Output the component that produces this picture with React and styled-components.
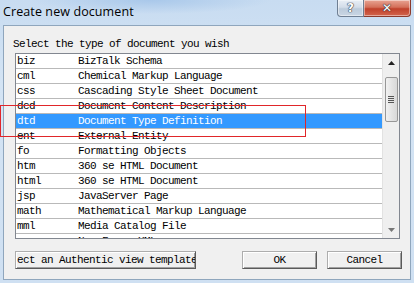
import React from 'react';
import styled, { createGlobalStyle } from 'styled-components';

const Global = createGlobalStyle`
    html, body {
        margin: 0;
        padding: 0;
        overflow: hidden;
    }
`;

const mono = `"Liberation Mono", "DejaVu Sans Mono", monospace`;

const rows = [
    ['biz', 'BizTalk Schema'],
    ['cml', 'Chemical Markup Language'],
    ['css', 'Cascading Style Sheet Document'],
    ['dcd', 'Document Content Description'],
    ['dtd', 'Document Type Definition'],
    ['ent', 'External Entity'],
    ['fo', 'Formatting Objects'],
    ['htm', '360 se HTML Document'],
    ['html', '360 se HTML Document'],
    ['jsp', 'JavaServer Page'],
    ['math', 'Mathematical Markup Language'],
    ['mml', 'Media Catalog File'],
    ['nav', 'New Forms XML'],
];

// Window frame
const Window = styled.div`
    position: relative;
    width: 414px;
    height: 283px;
    display: flex;
    flex-direction: column;
    background: linear-gradient(180deg, #c8dcf1 0%, #d4e4f4 30%, #cfe0f2 100%);
    overflow: hidden;
`;

const TitleBar = styled.div`
    height: 24px;
    display: flex;
    justify-content: space-between;
    align-items: flex-start;
    background: radial-gradient(ellipse 120px 14px at 150px 0px, #a9c8ea 0%, rgba(169, 200, 234, 0) 100%);
`;

const Title = styled.div`
    padding: 3px 0 0 3px;
    font-family: "Open Sans", "Noto Sans", sans-serif;
    font-size: 12.5px;
    color: #000;
    letter-spacing: 0.1px;
`;

const Controls = styled.div`
    display: flex;
    margin-right: 3px;
`;

const CtrlButton = styled.div`
    width: ${({ w }) => w}px;
    height: 17px;
    box-sizing: border-box;
    display: flex;
    align-items: center;
    justify-content: center;
    border: 1px solid ${({ close }) => (close ? '#8b3a2c' : '#6f7f93')};
    border-top: none;
    border-left-width: ${({ close }) => (close ? 0 : 1)}px;
    border-radius: ${({ close }) => (close ? '0 0 4px 0' : '0 0 0 4px')};
    background: ${({ close }) =>
        close
            ? 'linear-gradient(180deg, #e8a493 0%, #d4705a 45%, #c0412b 55%, #d2654d 100%)'
            : 'linear-gradient(180deg, #e9eff6 0%, #d3dde9 45%, #bccbdb 55%, #c9d6e4 100%)'};
    box-shadow: inset 0 0 0 1px rgba(255, 255, 255, 0.45);
`;

// Client area
const Client = styled.div`
    flex: 1;
    margin: 1px 3px 3px 3px;
    border: 1px solid #8fa6bd;
    background: #f0f0f0;
    display: flex;
    flex-direction: column;
`;

const Prompt = styled.div`
    padding: 11px 0 0 9px;
    height: 16px;
    font-family: ${mono};
    font-size: 11px;
    letter-spacing: -0.6px;
    line-height: 14px;
    color: #000;
    white-space: pre;
`;

const ListBox = styled.div`
    margin: 0 0 0 11px;
    width: 385px;
    height: 186px;
    box-sizing: border-box;
    border: 1px solid #828790;
    background: #fff;
    display: flex;
`;

const Rows = styled.div`
    flex: 1;
    overflow: hidden;
`;

const Row = styled.div`
    height: 14px;
    display: flex;
    border-bottom: 1px solid #b9b9b9;
    background: ${({ selected }) => (selected ? '#3399ff' : 'transparent')};
    color: ${({ selected }) => (selected ? '#fff' : '#000')};
    font-family: ${mono};
    font-size: 11px;
    letter-spacing: -0.6px;
    line-height: 15px;
    white-space: pre;
`;

const Ext = styled.span`
    width: 61px;
    padding-left: 1px;
    flex-shrink: 0;
`;

const Desc = styled.span``;

const Scrollbar = styled.div`
    width: 16px;
    flex-shrink: 0;
    background: #efefef;
    border-left: 1px solid #e2e2e2;
    display: flex;
    flex-direction: column;
    align-items: center;
`;

const Arrow = styled.div`
    height: 17px;
    width: 16px;
    display: flex;
    align-items: center;
    justify-content: center;
`;

const Thumb = styled.div`
    margin-top: 6px;
    width: 13px;
    height: 45px;
    box-sizing: border-box;
    border: 1px solid #979797;
    border-radius: 2px;
    background: linear-gradient(90deg, #f2f2f2 0%, #e4e4e4 50%, #d8d8d8 100%);
    display: flex;
    flex-direction: column;
    align-items: center;
    justify-content: center;
    gap: 1px;
`;

const Grip = styled.div`
    width: 6px;
    height: 1px;
    background: #555;
`;

const Track = styled.div`
    flex: 1;
`;

const ButtonRow = styled.div`
    display: flex;
    margin: 12px 0 0 11px;
`;

const Button = styled.div`
    width: ${({ w }) => w}px;
    height: 18px;
    margin-left: ${({ gap }) => gap || 0}px;
    box-sizing: border-box;
    border: 1px solid #adadad;
    border-right-color: #5a5a5a;
    border-bottom-color: #5a5a5a;
    box-shadow: inset 1px 1px 0 #fff, inset -1px -1px 0 #a0a0a0;
    background: #f0f0f0;
    display: flex;
    align-items: center;
    justify-content: ${({ left }) => (left ? 'flex-start' : 'center')};
    padding-left: ${({ left }) => (left ? 1 : 0)}px;
    font-family: ${mono};
    font-size: 11px;
    letter-spacing: -0.6px;
    line-height: 14px;
    white-space: pre;
    overflow: hidden;
    color: #000;
`;

// Annotation outline drawn over the dialog
const Marker = styled.div`
    position: absolute;
    left: 0;
    top: 105px;
    width: 306px;
    height: 32px;
    box-sizing: border-box;
    border: 1px solid #e0262a;
    pointer-events: none;
`;

const Glyph = styled.span`
    font-family: "DejaVu Sans", sans-serif;
    font-weight: bold;
    font-size: ${({ size }) => size}px;
    color: #fff;
    line-height: 1;
    margin-top: -1px;
    text-shadow: 0 0 1px #2a3342, 0 0 1px #2a3342, 0 0 1px #2a3342;
`;

export default function App() {
    return (
        <>
            <Global />
            <Window>
                <TitleBar>
                    <Title>Create new document</Title>
                    <Controls>
                        <CtrlButton w={27}>
                            <Glyph size={12}>?</Glyph>
                        </CtrlButton>
                        <CtrlButton w={47} close>
                            <Glyph size={12}>✕</Glyph>
                        </CtrlButton>
                    </Controls>
                </TitleBar>
                <Client>
                    <Prompt>Select the type of document you wish</Prompt>
                    <ListBox>
                        <Rows>
                            {rows.map(([ext, desc]) => (
                                <Row key={ext} selected={ext === 'dtd'}>
                                    <Ext>{ext}</Ext>
                                    <Desc>{desc}</Desc>
                                </Row>
                            ))}
                        </Rows>
                        <Scrollbar>
                            <Arrow>
                                <svg width="7" height="4" viewBox="0 0 7 4">
                                    <path d="M0 4 L3.5 0 L7 4 Z" fill="#222" />
                                </svg>
                            </Arrow>
                            <Thumb>
                                <Grip />
                                <Grip />
                                <Grip />
                                <Grip />
                            </Thumb>
                            <Track />
                            <Arrow>
                                <svg width="7" height="4" viewBox="0 0 7 4">
                                    <path d="M0 0 L7 0 L3.5 4 Z" fill="#777" />
                                </svg>
                            </Arrow>
                        </Scrollbar>
                    </ListBox>
                    <ButtonRow>
                        <Button w={181} left>ect an Authentic view template</Button>
                        <Button w={75} gap={46}>OK</Button>
                        <Button w={75} gap={10}>Cancel</Button>
                    </ButtonRow>
                </Client>
                <Marker />
            </Window>
        </>
    );
}
